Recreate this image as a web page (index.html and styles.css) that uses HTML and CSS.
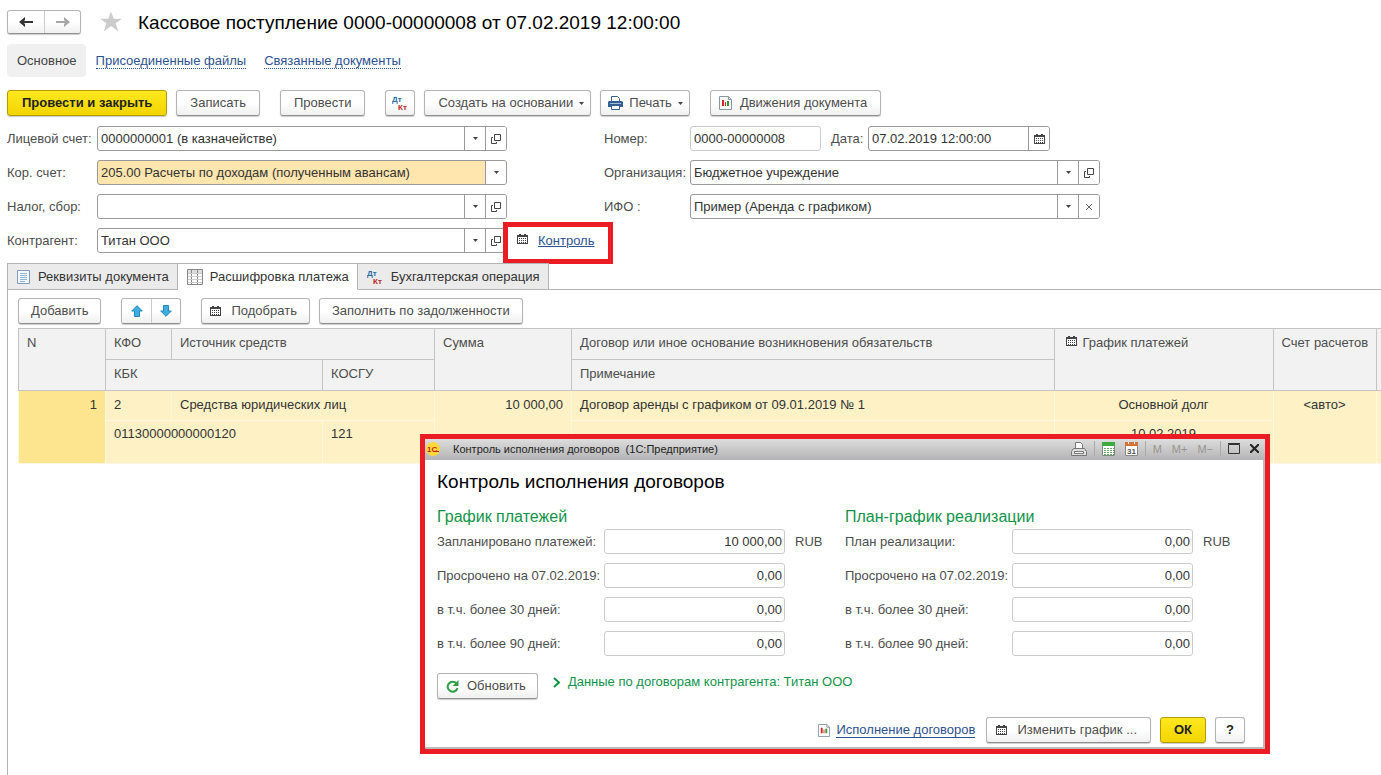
FILE: index.html
```html
<!DOCTYPE html>
<html lang="ru">
<head>
    <meta charset="UTF-8">
    <meta name="viewport" content="width=device-width, initial-scale=1.0">
    <title>Кассовое поступление</title>
    <link rel="stylesheet" href="styles.css">
</head>
<body>
    <!-- Shared icons -->
    <svg class="sprite" aria-hidden="true">
        <symbol id="i-cal" viewBox="0 0 11 10">
            <path fill="#444" d="M0 1h2V0h2v1h3V0h2v1h2v9H0z"/>
            <path fill="#fff" d="M1 3h9v6H1z"/>
            <path fill="#444" d="M2 4h1v1H2zM4 4h1v1H4zM6 4h1v1H6zM8 4h1v1H8zM2 6h1v1H2zM4 6h1v1H4zM6 6h1v1H6zM8 6h1v1H8zM2 8h1v1H2zM4 8h1v1H4zM6 8h1v1H6zM8 8h1v1H8z"/>
        </symbol>
        <symbol id="i-open" viewBox="0 0 10 10">
            <path fill="none" stroke="#444" d="M3.500.5h6v6h-6zM2 3.500H.5v6h5V8"/>
        </symbol>
        <symbol id="i-down" viewBox="0 0 5 3">
            <path fill="#444" d="M0 0h5L2.500 3z"/>
        </symbol>
        <symbol id="i-report" viewBox="0 0 13 14">
            <path fill="#fff" stroke="#8a97a3" d="M.5.5h9l3 3v10H.5z"/>
            <path fill="none" stroke="#8a97a3" d="M9.500.5v3h3"/>
            <path fill="#d22" d="M3 4h2v6H3z"/>
            <path fill="#d22" d="M6 6h1v4H6z"/>
            <path fill="#2a9a3c" d="M8 5h2v5H8z"/>
        </symbol>
    </svg>

    <header class="title-bar">
        <div class="nav">
            <button type="button" aria-label="Назад"><svg width="14" height="10"><path fill="none" stroke="#333" stroke-width="2" d="M14 5H2"/><path fill="#333" d="M0 5l6-5v3L4 5l2 2v3z"/></svg></button>
            <button type="button" aria-label="Вперед"><svg width="14" height="10"><path fill="none" stroke="#a6a6a6" stroke-width="2" d="M0 5h12"/><path fill="#a6a6a6" d="M14 5L8 0v3l2 2-2 2v3z"/></svg></button>
        </div>
        <svg class="star" width="22" height="21" viewBox="0 0 24 22"><path fill="#ccc" d="M12 0l3 8h9l-7 5 3 9-8-6-8 6 3-9-7-5h9z"/></svg>
        <h1>Кассовое поступление 0000-00000008 от 07.02.2019 12:00:00</h1>
    </header>

    <nav class="sections">
        <span class="current">Основное</span>
        <a href="#">Присоединенные файлы</a>
        <a href="#">Связанные документы</a>
    </nav>

    <div class="commands">
        <button type="button" class="btn primary post">Провести и закрыть</button>
        <button type="button" class="btn">Записать</button>
        <button type="button" class="btn spaced">Провести</button>
        <button type="button" class="btn spaced icon-only"><svg width="16" height="16"><text x="0" y="7" class="dt">Дт</text><text x="6" y="15" class="kt">Кт</text></svg></button>
        <button type="button" class="btn menu">Создать на основании <svg width="5" height="3"><use href="#i-down"/></svg></button>
        <button type="button" class="btn menu print"><svg width="15" height="14"><path fill="#fff" stroke="#355f8f" d="M3.500.5h6l2 2V6h-8z"/><path fill="#355f8f" d="M1 5h13l1 1v5H0V6z"/><path fill="#9cc0e4" d="M2 7h11v1H2z"/><path fill="#fff" stroke="#355f8f" d="M3.500 9.500h8v4h-8z"/></svg>Печать <svg width="5" height="3"><use href="#i-down"/></svg></button>
        <button type="button" class="btn spaced report"><svg width="13" height="14"><use href="#i-report"/></svg>Движения документа</button>
    </div>

    <form class="form">
        <div class="side">
            <div class="row">
                <label for="account">Лицевой счет:</label>
                <div class="field">
                    <input type="text" id="account" value="0000000001 (в казначействе)">
                    <button type="button" aria-label="Выбрать"><svg width="5" height="3"><use href="#i-down"/></svg></button>
                    <button type="button" aria-label="Открыть"><svg width="10" height="10"><use href="#i-open"/></svg></button>
                </div>
            </div>
            <div class="row">
                <label for="corr">Кор. счет:</label>
                <div class="field active">
                    <input type="text" id="corr" value="205.00 Расчеты по доходам (полученным авансам)">
                    <button type="button" aria-label="Выбрать"><svg width="5" height="3"><use href="#i-down"/></svg></button>
                </div>
            </div>
            <div class="row">
                <label for="tax">Налог, сбор:</label>
                <div class="field">
                    <input type="text" id="tax">
                    <button type="button" aria-label="Выбрать"><svg width="5" height="3"><use href="#i-down"/></svg></button>
                    <button type="button" aria-label="Открыть"><svg width="10" height="10"><use href="#i-open"/></svg></button>
                </div>
            </div>
            <div class="row">
                <label for="partner">Контрагент:</label>
                <div class="field">
                    <input type="text" id="partner" value="Титан ООО">
                    <button type="button" aria-label="Выбрать"><svg width="5" height="3"><use href="#i-down"/></svg></button>
                    <button type="button" aria-label="Открыть"><svg width="10" height="10"><use href="#i-open"/></svg></button>
                </div>
                <div class="callout">
                    <svg width="11" height="10"><use href="#i-cal"/></svg>
                    <a href="#">Контроль</a>
                </div>
            </div>
        </div>
        <div class="side right">
            <div class="row">
                <label for="number">Номер:</label>
                <div class="field muted number"><input type="text" id="number" value="0000-00000008" readonly></div>
                <label for="date" class="inline">Дата:</label>
                <div class="field date">
                    <input type="text" id="date" value="07.02.2019 12:00:00">
                    <button type="button" aria-label="Календарь"><svg width="11" height="10"><use href="#i-cal"/></svg></button>
                </div>
            </div>
            <div class="row">
                <label for="org">Организация:</label>
                <div class="field">
                    <input type="text" id="org" value="Бюджетное учреждение">
                    <button type="button" aria-label="Выбрать"><svg width="5" height="3"><use href="#i-down"/></svg></button>
                    <button type="button" aria-label="Открыть"><svg width="10" height="10"><use href="#i-open"/></svg></button>
                </div>
            </div>
            <div class="row">
                <label for="ifo">ИФО :</label>
                <div class="field">
                    <input type="text" id="ifo" value="Пример (Аренда с графиком)">
                    <button type="button" aria-label="Выбрать"><svg width="5" height="3"><use href="#i-down"/></svg></button>
                    <button type="button" aria-label="Очистить"><svg width="6" height="6"><path stroke="#666" d="M0 0l6 6M6 0L0 6"/></svg></button>
                </div>
            </div>
        </div>
    </form>

    <div class="tabs" role="tablist">
        <button type="button" role="tab"><svg width="13" height="14"><path fill="#f4f9ff" stroke="#7d9cc0" d="M.5.5h12v13H.5z"/><path stroke="#8fb4dc" d="M3 3.500h7M3 5.500h7M3 7.500h7M3 9.500h7M3 11.500h5"/></svg>Реквизиты документа</button>
        <button type="button" role="tab" class="selected" aria-selected="true"><svg width="16" height="16"><path fill="#fff" stroke="#888" d="M.5.5h15v15H.5z"/><path fill="#ddd" d="M1 1h14v3H1z"/><path stroke="#888" d="M4.500 0v16M10.500 0v16"/><path stroke="#ccc" d="M1 4.500h14M1 7.500h14M1 10.500h14M1 13.500h14"/></svg>Расшифровка платежа</button>
        <button type="button" role="tab"><svg width="16" height="16"><text x="0" y="7" class="dt">Дт</text><text x="6" y="15" class="kt">Кт</text></svg>Бухгалтерская операция</button>
    </div>

    <main class="panel">
        <div class="commands">
            <button type="button" class="btn add">Добавить</button>
            <div class="pair spaced">
                <button type="button" aria-label="Вверх"><svg width="12" height="12"><path fill="#3eaee0" stroke="#2487b8" d="M6 .7L11.300 6H8.500v5.500h-5V6H.7z"/></svg></button>
                <button type="button" aria-label="Вниз"><svg width="12" height="12"><path fill="#3eaee0" stroke="#2487b8" d="M6 11.300L.7 6h2.800V.5h5V6h2.800z"/></svg></button>
            </div>
            <button type="button" class="btn spaced pick"><svg width="11" height="10"><use href="#i-cal"/></svg>Подобрать</button>
            <button type="button" class="btn fill">Заполнить по задолженности</button>
        </div>

        <table>
            <colgroup>
                <col class="c-n"><col class="c-kfo"><col class="c-src"><col class="c-kosgu"><col class="c-sum"><col><col class="c-plan"><col class="c-acc"><col class="c-rest">
            </colgroup>
            <thead>
                <tr>
                    <th rowspan="2">N</th>
                    <th>КФО</th>
                    <th colspan="2">Источник средств</th>
                    <th rowspan="2">Сумма</th>
                    <th>Договор или иное основание возникновения обязательств</th>
                    <th rowspan="2"><svg width="11" height="10"><use href="#i-cal"/></svg>График платежей</th>
                    <th rowspan="2">Счет расчетов</th>
                    <th rowspan="2"></th>
                </tr>
                <tr>
                    <th colspan="2">КБК</th>
                    <th>КОСГУ</th>
                    <th>Примечание</th>
                </tr>
            </thead>
            <tbody>
                <tr>
                    <td rowspan="2" class="num marked">1</td>
                    <td>2</td>
                    <td colspan="2">Средства юридических лиц</td>
                    <td rowspan="2" class="num">10 000,00</td>
                    <td>Договор аренды с графиком от 09.01.2019 № 1</td>
                    <td class="mid">Основной долг</td>
                    <td rowspan="2" class="mid">&lt;авто&gt;</td>
                    <td rowspan="2"></td>
                </tr>
                <tr>
                    <td colspan="2">01130000000000120</td>
                    <td>121</td>
                    <td></td>
                    <td class="mid">10.02.2019</td>
                </tr>
            </tbody>
        </table>
    </main>

    <section class="dialog" role="dialog" aria-labelledby="dialogTitle">
        <div class="dialog-bar">
            <svg width="14" height="14" viewBox="0 0 14 14"><circle cx="7" cy="7" r="7" fill="#ffd83a"/><text x="1" y="10" class="logo">1С</text><path stroke="#c81e1e" d="M7 9.500h6"/></svg>
            <span class="caption">Контроль исполнения договоров&nbsp; (1С:Предприятие)</span>
            <button type="button" aria-label="Печать"><svg width="16" height="14"><path fill="#fff" stroke="#777" d="M4.500 6V.5h5l2 2V6"/><path fill="#ddd" stroke="#777" d="M2.500 6.500h11l2 3v4H.5v-4z"/><path fill="#fff" stroke="#777" d="M3.500 9.500h9v2h-9z"/></svg></button>
            <i></i>
            <button type="button" aria-label="Калькулятор"><svg width="13" height="14"><path fill="#fff" stroke="#7c8c7c" d="M.5.5h12v13H.5z"/><path fill="#3daa3d" d="M0 0h13v4H0z"/><path stroke="#69a069" stroke-dasharray="2 1" d="M2 6.500h10M2 8.500h10M2 10.500h10M2 12.500h10"/></svg></button>
            <button type="button" aria-label="Календарь"><svg width="13" height="14"><path fill="#fff" stroke="#888" d="M.5.5h12v13H.5z"/><path fill="#d2743a" d="M0 0h13v4H0z"/><path stroke="#fff" d="M3.500 0v2M9.500 0v2"/><text x="2" y="12" class="day">31</text></svg></button>
            <i></i>
            <button type="button" class="mem">M</button>
            <button type="button" class="mem">M+</button>
            <button type="button" class="mem">M−</button>
            <i></i>
            <button type="button" aria-label="Развернуть"><svg width="12" height="11"><path fill="none" stroke="#333" d="M.5 1.500h11v9H.5zM0 .5h12"/></svg></button>
            <button type="button" aria-label="Закрыть"><svg width="9" height="9"><path stroke="#222" stroke-width="2" d="M0 0l9 9M9 0L0 9"/></svg></button>
        </div>
        <div class="dialog-body">
            <h2 id="dialogTitle">Контроль исполнения договоров</h2>
            <div class="plans">
                <fieldset>
                    <legend>График платежей</legend>
                    <div class="row"><label for="p1">Запланировано платежей:</label><input type="text" id="p1" value="10 000,00" readonly><span>RUB</span></div>
                    <div class="row"><label for="p2">Просрочено на 07.02.2019:</label><input type="text" id="p2" value="0,00" readonly></div>
                    <div class="row"><label for="p3">в т.ч. более 30 дней:</label><input type="text" id="p3" value="0,00" readonly></div>
                    <div class="row"><label for="p4">в т.ч. более 90 дней:</label><input type="text" id="p4" value="0,00" readonly></div>
                </fieldset>
                <fieldset>
                    <legend>План-график реализации</legend>
                    <div class="row"><label for="r1">План реализации:</label><input type="text" id="r1" value="0,00" readonly><span>RUB</span></div>
                    <div class="row"><label for="r2">Просрочено на 07.02.2019:</label><input type="text" id="r2" value="0,00" readonly></div>
                    <div class="row"><label for="r3">в т.ч. более 30 дней:</label><input type="text" id="r3" value="0,00" readonly></div>
                    <div class="row"><label for="r4">в т.ч. более 90 дней:</label><input type="text" id="r4" value="0,00" readonly></div>
                </fieldset>
            </div>
            <div class="refresh">
                <button type="button" class="btn"><svg width="13" height="13"><path fill="none" stroke="#2f9e44" stroke-width="2" d="M10.500 3.500A5 5 0 1 0 11.500 8"/><path fill="#2f9e44" d="M12.500 0v6h-6z"/></svg>Обновить</button>
                <a href="#"><svg width="7" height="11"><path fill="none" stroke="#12934a" stroke-width="2" d="M1 1l5 4.500L1 10"/></svg>Данные по договорам контрагента: Титан ООО</a>
            </div>
            <div class="actions">
                <a href="#"><svg width="12" height="13"><use href="#i-report"/></svg><span>Исполнение договоров</span></a>
                <button type="button" class="btn edit"><svg width="11" height="10"><use href="#i-cal"/></svg>Изменить график ...</button>
                <button type="button" class="btn primary">ОК</button>
                <button type="button" class="btn help">?</button>
            </div>
        </div>
    </section>
</body>
</html>
```
FILE: styles.css
```css
* {
    box-sizing: border-box;
}

body {
    margin: 0;
    padding: 9px 0 0 7px;
    min-height: 100vh;
    font-family: "Liberation Sans", Arial, sans-serif;
    font-size: 13px;
    line-height: 16px;
    color: #4d4d4d;
    background-color: #fff;
    display: flex;
    flex-direction: column;
    position: relative;
    overflow-x: hidden;
}

button, input {
    font: inherit;
    color: inherit;
    margin: 0;
}

button {
    cursor: pointer;
    white-space: nowrap;
}

svg {
    flex: none;
}

a {
    color: #2d5291;
}

h1, h2 {
    margin: 0;
    font-size: 19px;
    font-weight: normal;
    line-height: 24px;
    color: #000;
}

.sprite {
    position: absolute;
    width: 0;
    height: 0;
}

.dt, .kt {
    font-size: 8px;
    font-weight: bold;
}

.dt {
    fill: #2b6ca3;
}

.kt {
    fill: #b5281e;
}

/* Header */
.title-bar {
    display: flex;
    align-items: center;
    height: 25px;
}

.title-bar h1 {
    padding-top: 2px;
}

.nav, .pair {
    display: flex;
    border: 1px solid #b4b4b4;
    border-bottom-color: #8f8f8f;
    border-radius: 3px;
    box-shadow: 0 1px 1px #ccc;
}

.nav button, .pair button {
    display: flex;
    align-items: center;
    justify-content: center;
    width: 36px;
    height: 22px;
    padding: 0;
    border: none;
    background: linear-gradient(#fff 50%, #f0f0f0);
    border-radius: 3px;
}

.nav button + button, .pair button + button {
    border-left: 1px solid #ccc;
    border-radius: 0 3px 3px 0;
}

.star {
    margin: 0 16px 0 19px;
}

.sections {
    display: flex;
    align-items: center;
    gap: 18px;
    margin-top: 10px;
}

.sections .current {
    padding: 9px 9px 8px 10px;
    margin-right: -8px;
    border-radius: 4px;
    background-color: #f0f0f0;
    color: #444;
}

.sections a {
    text-decoration: none;
    border-bottom: 1px dotted #2d5291;
    line-height: 15px;
}

/* Buttons */
.commands {
    display: flex;
    gap: 9px;
    margin-top: 13px;
}

.btn {
    display: flex;
    align-items: center;
    justify-content: center;
    height: 26px;
    padding: 0 13px;
    border: 1px solid #b4b4b4;
    border-bottom-color: #8f8f8f;
    border-radius: 3px;
    background: linear-gradient(#fff 50%, #f0f0f0);
    box-shadow: 0 1px 1px #ccc;
}

.btn.primary {
    border-color: #b19b00;
    background: linear-gradient(#ffe81f, #f2d500);
    color: #222;
    font-weight: bold;
}

.btn.post {
    padding: 0 14px;
}

.spaced {
    margin-left: 11px;
}

.btn.icon-only {
    padding: 0 6px;
}

.btn.menu {
    gap: 6px;
    padding: 0 6px 0 13px;
}

.btn.print {
    padding-left: 7px;
}

.btn.report {
    gap: 8px;
    padding-left: 8px;
}

/* Document form */
.form {
    display: flex;
    gap: 97px;
    margin-top: 10px;
}

.side {
    width: 500px;
}

.side.right {
    width: 496px;
}

.row {
    display: flex;
    align-items: center;
    height: 25px;
    margin-bottom: 9px;
    position: relative;
}

.side label {
    width: 90px;
    white-space: nowrap;
}

.side.right label {
    width: 86px;
}

.side .row .inline {
    width: 37px;
    margin-left: 10px;
}

.field {
    display: flex;
    flex: 1;
    min-width: 0;
    height: 25px;
    border: 1px solid #999;
    border-radius: 3px;
    overflow: hidden;
}

.field input {
    flex: 1;
    min-width: 0;
    padding: 0 3px;
    border: none;
    background: none;
    color: #333;
}

.field button {
    display: flex;
    align-items: center;
    justify-content: center;
    width: 21px;
    padding: 0;
    border: none;
    border-left: 1px solid #999;
    background-color: #fff;
}

.field.active {
    background-color: #ffe5ae;
}

.field.muted {
    border-color: #ccc;
}

.field.number {
    flex: none;
    width: 131px;
}

.field.date {
    flex: none;
    width: 182px;
}

/* Red frame drawn over the end of the field */
.callout {
    position: absolute;
    left: 496px;
    top: -6px;
    display: flex;
    align-items: center;
    gap: 10px;
    width: 110px;
    height: 42px;
    padding: 0 0 5px 9px;
    border: 5px solid #ec1c24;
    background-color: #fff;
}

.callout svg {
    margin-bottom: 4px;
}

/* Tabs */
.tabs {
    display: flex;
    position: relative;
    margin-top: 1px;
    border-bottom: 1px solid #b4b4b4;
}

.tabs button {
    display: flex;
    align-items: center;
    gap: 8px;
    height: 27px;
    padding: 0 8px 0 9px;
    margin-bottom: -1px;
    border: 1px solid #b4b4b4;
    border-left-width: 0;
    background-color: #ebebeb;
    color: #333;
}

.tabs button:first-child {
    border-left-width: 1px;
}

.tabs .selected {
    gap: 7px;
    background-color: #fff;
    border-bottom-color: #fff;
}

.panel {
    flex: 1;
    padding-left: 10px;
    border-left: 1px solid #b4b4b4;
}

.panel .commands {
    margin: 0;
    padding: 8px 0 4px;
}

.panel .btn {
    padding: 0 12px;
}

.pair button {
    width: 29px;
    height: 24px;
}

.btn.pick {
    gap: 10px;
}

.btn.pick svg {
    margin-left: -4px;
}

/* Table */
table {
    width: 100%;
    table-layout: fixed;
    border-collapse: collapse;
    border-left: 1px solid #aaa;
    border-top: 1px solid #aaa;
    border-bottom: 1px solid #ddd;
}

th, td {
    padding: 6px 8px;
    text-align: left;
    vertical-align: top;
    font-weight: normal;
    white-space: nowrap;
    overflow: hidden;
}

th {
    height: 31px;
    border: 1px solid #c4c4c4;
    background-color: #f2f2f2;
}

th svg {
    margin: 0 6px 1px 3px;
}

td {
    height: 30px;
    border: 1px solid #fff8e0;
    background-color: #fdf1c5;
    color: #333;
}

tbody tr + tr td {
    height: 43px;
    padding-top: 5px;
}

td.marked {
    background-color: #fde48f;
}

td.num {
    text-align: right;
}

td.mid {
    text-align: center;
}

th:last-child, td:last-child {
    border-right: none;
}

.c-n { width: 87px; }
.c-kfo { width: 66px; }
.c-src { width: 151px; }
.c-kosgu { width: 112px; }
.c-sum { width: 137px; }
.c-plan { width: 219px; }
.c-acc { width: 103px; }
.c-rest { width: 5px; }

th:empty, td:empty {
    padding: 0;
}

/* Control window */
.dialog {
    position: absolute;
    left: 420px;
    top: 434px;
    width: 850px;
    border: 5px solid #ec1c24;
    background-color: #fff;
}

.dialog-bar {
    display: flex;
    align-items: center;
    gap: 10px;
    height: 21px;
    padding: 0 6px 2px 1px;
    background: linear-gradient(#ddd, #b4b4b6);
    font-size: 11px;
    color: #222;
}

.dialog-bar .caption {
    flex: 1;
    margin-left: 3px;
}

.dialog-bar button {
    display: flex;
    padding: 0;
    border: none;
    background: none;
}

.dialog-bar i {
    width: 1px;
    height: 15px;
    margin: 0 -3px;
    background-color: #aaa;
}

.dialog-bar .mem {
    color: #9a948c;
}

.logo {
    font-size: 8px;
    font-weight: bold;
    fill: #c81e1e;
}

.day {
    font-size: 8px;
    font-weight: bold;
    fill: #555;
}

.dialog-body {
    padding: 10px 18px 4px 12px;
    border-right: 2px solid #bbb;
    border-bottom: 2px solid #bbb;
}

.plans {
    display: flex;
    margin-top: 13px;
}

fieldset {
    flex: none;
    width: 408px;
    margin: 0;
    padding: 0;
    border: none;
}

legend {
    padding: 0;
    font-size: 16px;
    line-height: 20px;
    margin-bottom: 2px;
    color: #12934a;
}

fieldset label {
    width: 167px;
    white-space: nowrap;
}

fieldset input {
    width: 181px;
    height: 25px;
    padding: 0 2px;
    margin-right: 10px;
    border: 1px solid #ccc;
    border-radius: 3px;
    text-align: right;
    color: #333;
}

.refresh {
    display: flex;
    gap: 15px;
    margin-top: 8px;
}

.refresh .btn {
    gap: 8px;
    padding: 0 11px 0 8px;
}

.refresh a {
    display: flex;
    align-items: center;
    gap: 8px;
    height: 18px;
    color: #12934a;
    text-decoration: none;
}

.actions {
    display: flex;
    justify-content: flex-end;
    align-items: center;
    gap: 9px;
    margin-top: 18px;
}

.actions a {
    display: flex;
    align-items: center;
    gap: 6px;
    margin-right: 2px;
    text-decoration: none;
}

.actions a span {
    border-bottom: 1px solid #2d5291;
    line-height: 15px;
}

.actions .edit {
    gap: 10px;
    padding-left: 9px;
}

.actions .help {
    padding: 0 10px;
    color: #222;
    font-weight: bold;
}
```
